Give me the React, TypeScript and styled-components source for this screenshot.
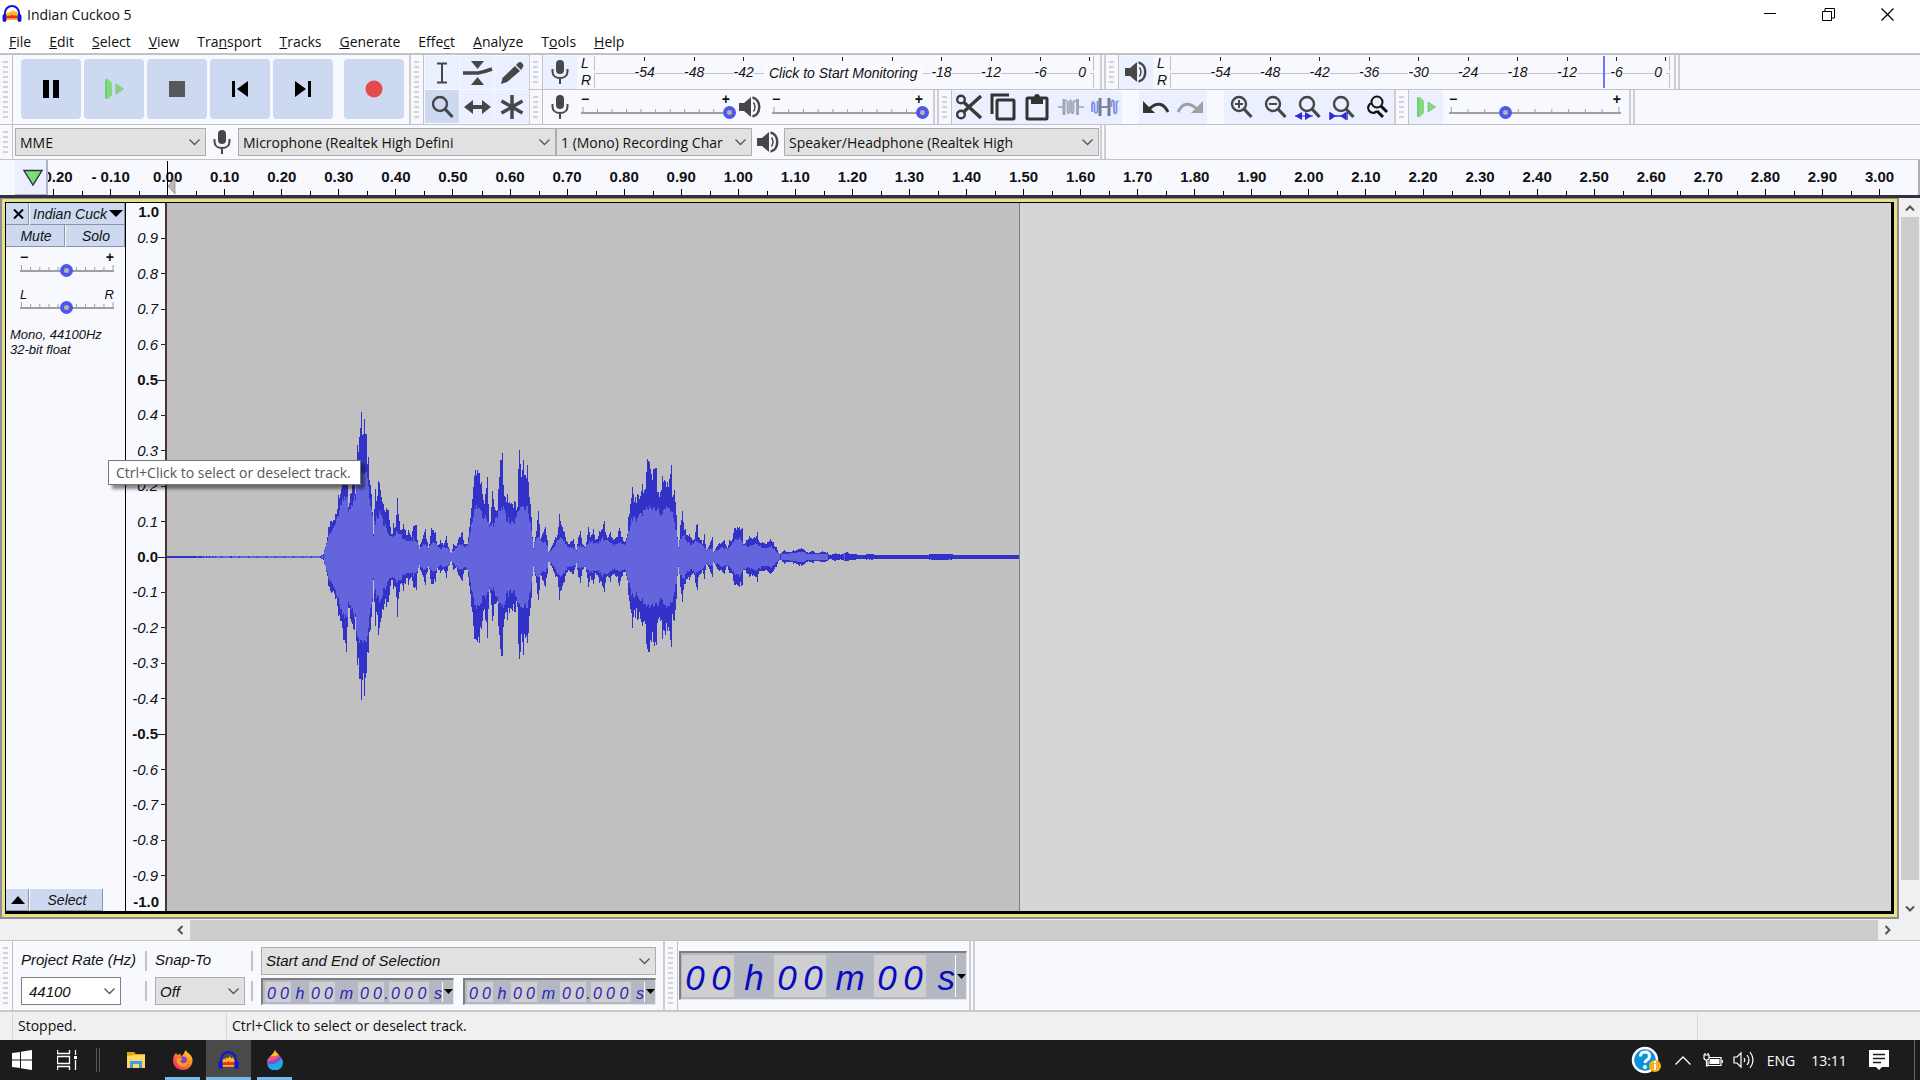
import React from "react";
import styled, { createGlobalStyle, css } from "styled-components";

const ui = `"Open Sans", "Noto Sans", sans-serif`;
const arial = `"Liberation Sans", Arial, sans-serif`;
const c = {
  panel: "#f8f9ff",
  line: "#c2c2c6",
  face: "#eaf0ff",
  blue: "#cdd9f1",
  ink: "#474747",
  grey: "#e1e1e1",
};

const GlobalStyle = createGlobalStyle`
  * { box-sizing: border-box; }
  body { margin: 0; background: #fff; font-family: ${ui}; font-size: 14px; color: #111; overflow: hidden; }
  button { border: 0; padding: 0; margin: 0; background: none; color: inherit; font: inherit; }
  svg { display: block; flex: none; }
`;

const Window = styled.div`
  display: flex;
  flex-direction: column;
  height: 100vh;
`;

/* ---------- title and menu ---------- */
const TitleBar = styled.header`
  display: flex;
  align-items: center;
  height: 28px;
  padding: 0 3px 0 2px;
  gap: 5px;
`;
const Title = styled.h1`
  margin: 0;
  flex: 1;
  font-size: 14px;
  font-weight: 400;
`;
const WindowButtons = styled.div`
  display: flex;
`;
const WindowButton = styled.button`
  display: grid;
  place-items: center;
  width: 59px;
  height: 28px;
`;
const MenuBar = styled.nav`
  display: flex;
  height: 27px;
  border-bottom: 2px solid ${c.line};
`;
const MenuItem = styled.button`
  padding: 0 9px;
  height: 26px;
`;

/* ---------- toolbars ---------- */
const Dock = styled.div`
  display: flex;
  background: ${c.panel};
`;
const DockRows = styled.div`
  flex: 1;
  min-width: 0;
`;
const DockRow = styled.div`
  display: flex;
  align-items: stretch;
  height: 35px;
  background: ${c.panel};
  border-bottom: 1px solid ${c.line};
`;
const Toolbar = styled.div<{ $w?: number; $tall?: boolean }>`
  display: flex;
  flex: none;
  align-items: center;
  width: ${(p) => (p.$w ? `${p.$w}px` : "auto")};
  border-right: 2px solid #cfcfd3;
  ${(p) => p.$tall && css`height: 70px; border-bottom: 1px solid ${c.line};`}
`;
const Grip = styled.div`
  align-self: stretch;
  flex: none;
  width: 13px;
  border-right: 1px solid ${c.line};
  padding: 6px 4px 5px 3px;
  &::before {
    content: "";
    display: block;
    height: 100%;
    background: repeating-linear-gradient(#d3d3d7 0 2px, transparent 2px 5px);
  }
`;
const Closer = styled.div`
  align-self: stretch;
  width: 4px;
  border-right: 2px solid #cfcfd3;
`;
const TransportGroup = styled.div`
  display: flex;
  align-self: flex-start;
  gap: 3px;
  padding: 4px 0 0 8px;
`;
const TransportButton = styled.button<{ $apart?: boolean }>`
  display: grid;
  place-items: center;
  width: 60px;
  height: 60px;
  border-radius: 4px;
  background: ${c.blue};
  margin-left: ${(p) => (p.$apart ? "8px" : "0")};
`;
const ToolGrid = styled.div`
  display: grid;
  grid-template-columns: repeat(3, 34px);
  gap: 1px;
  padding-left: 1px;
`;
const ToolButton = styled.button<{ $on?: boolean; $apart?: boolean }>`
  display: grid;
  place-items: center;
  flex: none;
  width: 34px;
  height: 33px;
  margin-left: ${(p) => (p.$apart ? "17px" : "0")};
  background: ${(p) => (p.$on ? c.blue : c.face)};
  border: solid ${(p) => (p.$on ? "#8f9cb8 #fff #fff #8f9cb8" : "#fff #adb4c6 #adb4c6 #fff")};
  border-width: ${(p) => (p.$on ? "2px 1px 1px 2px" : "1px 2px 2px 1px")};
`;
const IconBox = styled.span<{ $w: number }>`
  display: grid;
  place-items: center;
  flex: none;
  width: ${(p) => p.$w}px;
`;

/* ---------- meters ---------- */
const Channels = styled.div`
  display: flex;
  flex-direction: column;
  width: 17px;
  padding-left: 4px;
  font: italic 14px/17px ${arial};
`;
const MeterBox = styled.button<{ $w: number }>`
  display: grid;
  width: ${(p) => p.$w}px;
  height: 34px;
  text-align: left;
  background:
    linear-gradient(${c.line}, ${c.line}) left 1px/1px 15px no-repeat,
    linear-gradient(${c.line}, ${c.line}) left 19px/1px 14px no-repeat,
    linear-gradient(${c.line}, ${c.line}) right 1px/1px 15px no-repeat,
    linear-gradient(${c.line}, ${c.line}) right 19px/1px 14px no-repeat,
    linear-gradient(${c.line}, ${c.line}) 0 18px/100% 1px no-repeat;
  > * { grid-area: 1 / 1; }
`;
const MeterScale = styled.span`
  display: flex;
  padding: 0 4px 0 26px;
`;
const MeterMark = styled.span<{ $last?: boolean }>`
  flex: ${(p) => (p.$last ? 1 : 2)} 0 0;
  min-width: 0;
  height: 33px;
  padding-top: 9px;
  text-align: ${(p) => (p.$last ? "right" : "center")};
  font: italic 14px/17px ${arial};
  background: linear-gradient(#222, #222) ${(p) => (p.$last ? "right" : "center")} 2px/1px 4px no-repeat;
  > span { background: ${c.panel}; }
`;
const MeterHint = styled.span`
  align-self: center;
  justify-self: start;
  margin: 2px 0 0 170px;
  padding: 0 5px;
  background: #fbfbff;
  font: italic 14px/18px ${arial};
`;
const PeakLine = styled.span`
  width: 2px;
  height: 32px;
  margin: 1px 0 0 433px;
  background: #7373f7;
`;

/* ---------- sliders ---------- */
const SliderBox = styled.label<{ $w: number; $left: number; $right: number }>`
  display: block;
  flex: none;
  width: ${(p) => p.$w}px;
  margin: 0 ${(p) => p.$right}px 0 ${(p) => p.$left}px;
`;
const SliderEnds = styled.span`
  display: flex;
  justify-content: space-between;
  font: 14px/11px ${arial};
  > i { font-size: 13px; }
`;
const SliderStack = styled.span`
  display: grid;
  height: 15px;
  > * { grid-area: 1 / 1; }
`;
const Range = styled.input`
  appearance: none;
  height: 15px;
  width: calc(100% + 12px);
  margin: 0 -6px;
  background: none;
  &::-webkit-slider-thumb {
    appearance: none;
    width: 13px;
    height: 13px;
    border-radius: 50%;
    border: 4px solid #4d57ee;
    background: #b9b3a8;
  }
`;
function Slider(p: { label: string; w: number; left?: number; right?: number; value: number; ends?: [string, string] }) {
  const [a, b] = p.ends ?? ["−", "+"];
  return (
    <SliderBox $w={p.w} $left={p.left ?? 0} $right={p.right ?? 0}>
      <SliderEnds>
        {p.ends ? <><i>{a}</i><i>{b}</i></> : <><b>{a}</b><b>{b}</b></>}
      </SliderEnds>
      <SliderStack>
        <svg width="100%" height="15">
          <rect x="0" y="7" width="100%" height="2" fill="#a0a0a0" />
          {Array.from({ length: 11 }, (_, i) => (
            <rect key={i} x={`${1 + i * 9.75}%`} y={i % 10 ? 4 : 2} width="1" height={i % 10 ? 3 : 5} fill="#a0a0a0" />
          ))}
        </svg>
        <Range type="range" min={0} max={100} defaultValue={p.value} aria-label={p.label} />
      </SliderStack>
    </SliderBox>
  );
}

/* ---------- drop-downs ---------- */
const PickBox = styled.span<{ $w: number; $white?: boolean; $italic?: boolean }>`
  display: grid;
  align-items: center;
  flex: none;
  width: ${(p) => p.$w}px;
  height: 28px;
  border: 1px solid ${(p) => (p.$white ? "#7f7f7f" : "#adadad")};
  background: ${(p) => (p.$white ? "#fff" : c.grey)};
  > * { grid-area: 1 / 1; }
  > svg { justify-self: end; margin-right: 4px; pointer-events: none; }
  > select, > input {
    appearance: none;
    width: 100%;
    min-width: 0;
    height: 26px;
    padding: 0 20px 0 ${(p) => (p.$white ? 7 : 4)}px;
    border: 0;
    border-radius: 0;
    outline: 0;
    background: none;
    color: #111;
    font: ${(p) => (p.$italic ? `italic 15px ${arial}` : `14px ${ui}`)};
  }
`;
const Chevron = () => (
  <svg width="13" height="8" viewBox="0 0 13 8"><path d="M1.5 1.5l5 5 5-5" fill="none" stroke="#555" strokeWidth="1.3" /></svg>
);
function Pick(p: { w: number; label: string; value: string; italic?: boolean }) {
  return (
    <PickBox $w={p.w} $italic={p.italic}>
      <select aria-label={p.label} defaultValue={p.value}><option>{p.value}</option></select>
      <Chevron />
    </PickBox>
  );
}

/* ---------- time ruler ---------- */
const TimeRuler = styled.div`
  display: flex;
  position: relative;
  height: 35px;
  background: ${c.panel};
  padding-left: 15px;
`;
const PinButton = styled.button`
  display: grid;
  place-items: center;
  flex: none;
  width: 33px;
  padding-left: 4px;
  background: ${c.face};
  border-right: 2px solid #adb4c6;
  border-bottom: 1px solid #adb4c6;
`;
const TimeScale = styled.div`
  flex: 1;
  min-width: 0;
  overflow: hidden;
  border-right: 2px solid #b0b0b4;
`;
const TimeMarks = styled.div`
  display: flex;
  height: 35px;
  margin: 0 10px 0 -23px;
`;
const TimeMark = styled.span`
  flex: 1 0 0;
  min-width: 0;
  padding-top: 8px;
  text-align: center;
  white-space: nowrap;
  font: bold 15px/18px ${arial};
  background:
    linear-gradient(#000, #000) center bottom/1px 6px no-repeat,
    linear-gradient(#000, #000) left bottom/1px 4px no-repeat;
`;
const PlayHead = styled.svg`
  position: absolute;
  left: 166px;
  top: 1px;
`;

/* ---------- track area ---------- */
const TrackArea = styled.main`
  flex: 1;
  min-height: 0;
  display: flex;
  border-top: 3px solid #32323e;
  background: #f0f0f0;
`;
const Frame = styled.div`
  flex: 1;
  min-width: 0;
  display: flex;
  border: solid #8c8ca2;
  border-width: 1px 2px 2px 2px;
  margin: 0 1px 1px 0;
`;
const Highlight = styled.div`
  flex: 1;
  min-width: 0;
  display: flex;
  border: 3px solid #e6e380;
`;
const Track = styled.section`
  flex: 1;
  min-width: 0;
  display: flex;
  border: solid #000;
  border-width: 1px 3px 3px 1px;
`;
const ControlPanel = styled.div`
  display: flex;
  flex-direction: column;
  flex: none;
  width: 120px;
  border-right: 1px solid #000;
  background: ${c.panel};
  font: italic 14px/16px ${arial};
`;
const PanelRow = styled.div`
  display: flex;
  flex: none;
  height: 22px;
  gap: 1px;
`;
const PanelButton = styled.button<{ $w?: number }>`
  display: flex;
  align-items: center;
  justify-content: center;
  gap: 2px;
  flex: ${(p) => (p.$w ? "none" : "1")};
  width: ${(p) => (p.$w ? `${p.$w}px` : "auto")};
  padding-left: 2px;
  background: ${c.blue};
  border: solid #8f949f;
  border-width: 0 1px 1px 0;
`;
const PanelSliders = styled.div`
  display: flex;
  flex-direction: column;
  gap: 11px;
  padding: 5px 0 0 14px;
`;
const TrackInfo = styled.p`
  flex: 1;
  margin: 0;
  padding: 12px 0 0 4px;
  font-size: 13px;
  line-height: 15px;
`;
const LevelRuler = styled.div`
  display: flex;
  flex-direction: column;
  flex: none;
  width: 41px;
  border-right: 2px solid #4a3434;
  background: ${c.panel};
`;
const LevelMark = styled.span<{ $half?: boolean; $bold?: boolean }>`
  flex: ${(p) => (p.$half ? 1 : 2)} 0 0;
  min-height: 0;
  display: flex;
  align-items: center;
  justify-content: flex-end;
  padding-right: ${(p) => (p.$half ? 6 : 7)}px;
  font: ${(p) => (p.$bold ? "bold" : "italic")} 15px/16px ${arial};
  background: ${(p) => (p.$half ? "none" : `linear-gradient(#222, #222) right center/${p.$bold ? 7 : 4}px 1px no-repeat`)};
`;
const Canvas = styled.div`
  flex: 1;
  min-width: 0;
  background: #d6d6d6;
`;
const Clip = styled.div`
  width: 49.5%;
  height: 100%;
  border-right: 1px solid #808080;
  background: #c0c0c0;
`;

/* ---------- scroll bars ---------- */
const VScroll = styled.div`
  display: flex;
  flex-direction: column;
  align-items: center;
  flex: none;
  width: 20px;
  padding: 1px 1px 2px;
`;
const HScroll = styled.div`
  display: flex;
  align-items: center;
  flex: none;
  height: 20px;
  padding: 0 22px 0 170px;
  background: #f0f0f0;
`;
const ScrollArrow = styled.button`
  display: grid;
  place-items: center;
  flex: none;
  width: 20px;
  height: 18px;
`;
const Thumb = styled.div`
  flex: 1;
  align-self: stretch;
  background: #cdcdcd;
`;
const ThumbGap = styled.div`
  height: 20px;
`;

/* ---------- selection bar ---------- */
const SelectionDock = styled.footer`
  display: flex;
  flex: none;
  height: 72px;
  border-top: 1px solid ${c.line};
  border-bottom: 2px solid #c8c8cc;
  background: ${c.panel};
`;
const Field = styled.div<{ $w: number }>`
  display: flex;
  flex-direction: column;
  flex: none;
  gap: 3px;
  width: ${(p) => p.$w}px;
  font: italic 15px/28px ${arial};
  > label { height: 28px; white-space: nowrap; }
`;
const Divider = styled.div`
  width: 2px;
  height: 50px;
  margin-right: 8px;
  background: linear-gradient(${c.line} 0 20px, transparent 20px 30px, ${c.line} 30px);
`;
const TimeRow = styled.div`
  display: flex;
  gap: 9px;
`;
const TimeBox = styled.div<{ $big?: boolean }>`
  display: flex;
  flex: none;
  padding: 2px 0 2px ${(p) => (p.$big ? 1 : 2)}px;
  height: ${(p) => (p.$big ? 49 : 27)}px;
  border: solid #7e7e82;
  border-width: 2px 1px 1px 2px;
  border-right-color: #e4e4e4;
  border-bottom-color: #e4e4e4;
  background: #b3b8c2;
  color: ${(p) => (p.$big ? "#0a0abf" : "#2c22bd")};
  font: italic ${(p) => (p.$big ? "35px/45px" : "16px/23px")} ${arial};
`;
const Digits = styled.span`
  display: flex;
  background: #cfcfcf;
`;
const Cell = styled.span<{ $w: number; $end?: boolean }>`
  width: ${(p) => p.$w}px;
  text-align: ${(p) => (p.$end ? "right" : "center")};
`;
const TimeMenu = styled.button`
  display: grid;
  place-items: center;
  width: 11px;
  border-left: 1px solid #fff;
`;

const StatusBar = styled.div`
  display: flex;
  flex: none;
  height: 28px;
  padding: 1px 0 1px 12px;
  background: #f0f0f0;
`;
const StatusCell = styled.span<{ $w?: number }>`
  flex: ${(p) => (p.$w ? "none" : "1")};
  width: ${(p) => (p.$w ? `${p.$w}px` : "auto")};
  padding-left: 5px;
  border-left: 1px solid #d7d7d7;
  line-height: 26px;
`;

/* ---------- task bar ---------- */
const TaskBar = styled.div`
  display: flex;
  align-items: stretch;
  flex: none;
  height: 40px;
  background: #1c1c1c;
  color: #fff;
`;
const TaskButton = styled.button<{ $w: number; $running?: boolean; $active?: boolean }>`
  display: grid;
  place-items: center;
  width: ${(p) => p.$w}px;
  background: ${(p) => (p.$active ? "#4a4a4a" : "none")};
  box-shadow: ${(p) => (p.$running ? "inset 0 -3px #76b9ed" : "none")};
`;
const TaskGap = styled.span<{ $w?: number }>`
  flex: ${(p) => (p.$w ? "none" : "1")};
  width: ${(p) => p.$w ?? 0}px;
`;
const Clock = styled.button<{ $w: number }>`
  width: ${(p) => p.$w}px;
  font-size: 14px;
  text-align: center;
`;
const ShowDesktop = styled.button`
  width: 6px;
  border-left: 1px solid #666;
`;
const Tooltip = styled.div`
  position: absolute;
  left: 108px;
  top: 460px;
  padding: 0 9px 0 7px;
  border: 1px solid #767676;
  background: #fff;
  color: #575757;
  line-height: 23px;
  white-space: nowrap;
  box-shadow: 4px 4px 3px rgba(0, 0, 0, 0.45);
`;

/* ---------- icons ---------- */
const Headphones = ({ size = 20 }: { size?: number }) => (
  <svg width={size} height={size} viewBox="0 0 20 20">
    <path d="M4 16V10L6 8l1 1 1-2 1.5 1L11 6l2 2 1-1 2 3v6z" fill="#fdb827" />
    <path d="M4.5 12.2l2-.8 1.5.4 2-1 2 1 2-.6 1.5 1v2H4.5z" fill="#f22d12" />
    <path d="M3 12V9a7 7 0 0 1 14 0v3" fill="none" stroke="#1414dc" strokeWidth="2" />
    <rect x="0.5" y="10" width="4" height="8" rx="2" fill="#1414dc" />
    <rect x="15.5" y="10" width="4" height="8" rx="2" fill="#1414dc" />
  </svg>
);
const Mic = () => (
  <svg width="18" height="26" viewBox="0 0 18 26">
    <rect x="5" y="1" width="8" height="14" rx="4" fill={c.ink} />
    <path d="M1.5 10v2.500c0 4 3.200 6.500 7.500 6.500s7.500-2.500 7.500-6.500V10M9 19v6" fill="none" stroke={c.ink} strokeWidth="2" />
  </svg>
);
const Speaker = () => (
  <svg width="24" height="24" viewBox="0 0 24 24">
    <path d="M1 8h5l7-6v20l-7-6H1z" fill={c.ink} />
    <path d="M15.500 7.500q3 4.500 0 9" fill="none" stroke={c.ink} strokeWidth="1.500" />
    <path d="M14.500 2.500c9 2 9 17 0 19" fill="none" stroke={c.ink} strokeWidth="2.500" />
  </svg>
);
const PlaySpeed = () => (
  <svg width="22" height="22" viewBox="0 0 22 22">
    <path d="M2 1h3l4 4v12l-4 4H2z" fill="#84d97c" /><path d="M3 2v18" stroke="#66bd62" />
    <path d="M13 6l7.500 5-7.500 5z" fill="#84d97c" stroke="#79bd7a" strokeWidth="0.800" />
  </svg>
);
const Lens = ({ children }: { children?: React.ReactNode }) => (
  <svg width="28" height="28" viewBox="0 0 28 28" fill="none" stroke={c.ink}>
    <circle cx="12" cy="11" r="7" strokeWidth="2.400" /><path d="M17 16l7.500 8" strokeWidth="3.200" />{children}
  </svg>
);
const stroke = (w: number, color = c.ink) => ({ fill: "none", stroke: color, strokeWidth: w });
const Tri = ({ d, w = 12, h = 7 }: { d: string; w?: number; h?: number }) => (
  <svg width={w} height={h}><path d={d} fill="#000" /></svg>
);

/* ---------- waveform ---------- */
// Peak envelope: pairs of sample position and level, in thirds of a pixel from t = 0.23 s.
const env = [
  -399,2,40,3,60,3,68,8,75,30,80,60,85,90,90,108,100,110,107,130,115,185,125,215,130,250,137,292,140,220,145,150,150,190,155,215,162,220,165,190,170,335,174,315,178,360,183,436,188,370,193,414,197,368,201,280,205,300,209,215,214,190,219,70,224,205,230,183,235,228,240,200,245,165,250,160,257,148,263,140,270,90,275,68,280,102,285,90,290,178,295,130,300,80,308,100,314,80,320,65,325,82,333,60,338,92,347,97,352,50,356,25,362,45,368,65,375,85,380,45,385,28,393,86,400,80,405,75,410,35,420,50,430,35,438,62,445,30,452,12,460,40,467,32,475,55,485,74,492,40,502,38,506,90,512,148,518,210,525,262,532,260,538,252,543,225,549,170,555,190,560,240,564,160,568,100,573,150,577,197,583,150,590,140,595,205,600,290,605,313,609,215,615,180,622,190,628,165,635,160,641,168,650,150,655,265,658,322,663,240,669,290,674,245,681,275,686,180,691,160,696,60,699,28,705,60,714,138,720,55,728,75,735,90,740,50,745,15,755,35,765,60,770,65,778,130,785,90,793,75,800,45,810,45,820,55,827,20,835,60,840,78,846,40,855,30,864,90,870,60,878,84,885,50,890,55,897,78,905,85,911,108,918,65,925,60,930,75,940,50,950,60,957,87,965,60,973,45,980,70,985,120,990,160,995,210,1002,165,1010,190,1018,175,1026,218,1035,205,1040,293,1047,285,1053,250,1060,265,1067,268,1072,195,1078,180,1085,243,1092,230,1100,225,1107,235,1112,275,1117,180,1123,200,1128,125,1132,60,1135,30,1140,95,1145,137,1152,80,1156,85,1160,65,1168,70,1175,50,1182,55,1187,95,1190,100,1194,60,1202,50,1207,40,1212,68,1218,20,1225,30,1235,60,1240,15,1248,30,1255,40,1265,45,1272,52,1280,28,1288,50,1295,55,1303,87,1315,87,1325,86,1330,40,1340,50,1348,62,1355,55,1362,60,1371,76,1376,45,1385,45,1395,40,1405,45,1410,54,1418,45,1427,30,1435,12,1440,8,1452,22,1460,14,1480,20,1490,22,1502,27,1510,25,1520,14,1538,18,1545,12,1565,17,1580,14,1588,6,1605,11,1620,7,1640,14,1655,9,1680,7,1720,8,1740,5,1840,7,1860,6,1900,8,1946,8,2040,5,2163,5,
];
function buildWave() {
  const n = 853;
  const noise = (i: number) => Math.abs((Math.sin(i * 12.9898) * 437.58) % 1);
  const peak: number[] = [];
  let k = 0;
  for (let i = 0; i < n; i++) {
    const x = i * 3 - 399;
    while (k + 2 < env.length - 2 && env[k + 2] < x) k += 2;
    const a = { x: env[k], v: env[k + 1] };
    const b = { x: env[k + 2], v: env[k + 3] };
    const near = b.x - x <= 1 ? b.v : x - a.x <= 1 ? a.v : -1;
    if (near >= 0) {
      peak.push(near / 3);
      continue;
    }
    const t = Math.min(1, Math.max(0, (x - a.x) / (b.x - a.x)));
    const v = (a.v + (b.v - a.v) * t) / 3;
    peak.push(v < 3 ? v : v * (0.88 + 0.16 * noise(i)));
  }
  let outer = "", inner = "";
  peak.forEach((v, i) => {
    const a = Math.max(1, Math.round(v));
    const low = Math.max(1, Math.round(v * (0.98 + 0.04 * Math.sin(i * 2.3))));
    outer += `M${i} ${354 - a}h1V${355 + low}h-1z`;
    let sum = 0, m = 0;
    for (let j = Math.max(0, i - 3); j <= Math.min(n - 1, i + 3); j++) { sum += peak[j]; m++; }
    const ratio = (i > 156 && i < 206 ? 0.7 : 0.58) + 0.14 * noise(i + 7);
    const cap = i > 300 ? 52 : 88;
    const r = Math.round(Math.min(v * 0.9, (sum / m) * ratio, cap - 6 * noise(i + 3)));
    if (r > 2 || (i < 156 && i % 9)) inner += `M${i} ${354 - r}h1V${355 + r}h-1z`;
  });
  return { outer, inner };
}
const wave = buildWave();

const menus: [string, string, string][] = [
  ["", "F", "ile"], ["", "E", "dit"], ["", "S", "elect"], ["", "V", "iew"], ["Tra", "n", "sport"], ["", "T", "racks"],
  ["", "G", "enerate"], ["Effe", "c", "t"], ["", "A", "nalyze"], ["T", "o", "ols"], ["", "H", "elp"],
];
const db = ["-54", "-48", "-42", "-36", "-30", "-24", "-18", "-12", "-6"];
const times = Array.from({ length: 33 }, (_, i) => (i < 2 ? `- 0.${2 - i}0` : ((i - 2) / 10).toFixed(2)));
const levels = Array.from({ length: 21 }, (_, i) => ((10 - i) / 10).toFixed(1));

function Meter({ recording }: { recording?: boolean }) {
  return (
    <>
      <Channels><span>L</span><span>R</span></Channels>
      <MeterBox $w={500} aria-label={recording ? "Recording level" : "Playback level"}>
        <MeterScale>
          {db.map((d, i) => <MeterMark key={d}>{recording && i > 2 && i < 6 ? null : <span>{d}</span>}</MeterMark>)}
          <MeterMark $last><span>0&nbsp;</span></MeterMark>
        </MeterScale>
        {recording ? <MeterHint>Click to Start Monitoring</MeterHint> : <PeakLine />}
      </MeterBox>
    </>
  );
}

function TimeDisplay({ big }: { big?: boolean }) {
  const d = big ? 26 : 13;
  const two = <Digits><Cell $w={d}>0</Cell><Cell $w={d}>0</Cell></Digits>;
  return (
    <TimeBox $big={big}>
      {two}<Cell $w={big ? 40 : 18}>h</Cell>
      {two}<Cell $w={big ? 48 : 23}>m</Cell>
      {two}
      {!big && <><Cell $w={5}>.</Cell><Digits><Cell $w={13}>0</Cell><Cell $w={13}>0</Cell><Cell $w={14}>0</Cell></Digits></>}
      <Cell $w={big ? 29 : 13} $end>s</Cell>
      <TimeMenu aria-label="Time format"><Tri d="M0 0h9L4.500 5z" w={9} h={5} /></TimeMenu>
    </TimeBox>
  );
}

export default function App() {
  return (
    <Window>
      <GlobalStyle />
      <TitleBar>
        <Headphones />
        <Title>Indian Cuckoo 5</Title>
        <WindowButtons>
          <WindowButton aria-label="Minimize"><svg width="12" height="12"><path d="M0 5.500h12" stroke="#000" /></svg></WindowButton>
          <WindowButton aria-label="Restore"><svg width="13" height="13"><path d="M.5 3.500h9v9h-9zM3 3V.5h9.500V10H10" {...stroke(1, "#000")} /></svg></WindowButton>
          <WindowButton aria-label="Close"><svg width="13" height="13"><path d="M.5.5l12 12M12.500.5l-12 12" {...stroke(1.2, "#000")} /></svg></WindowButton>
        </WindowButtons>
      </TitleBar>
      <MenuBar>
        {menus.map(([a, b, d]) => <MenuItem key={a + b + d}>{a}<u>{b}</u>{d}</MenuItem>)}
      </MenuBar>

      <Dock>
        <Toolbar $tall $w={411}>
          <Grip />
          <TransportGroup>
            <TransportButton aria-label="Pause"><svg width="16" height="18"><path d="M0 0h6v18H0zM10 0h6v18h-6z" /></svg></TransportButton>
            <TransportButton aria-label="Play"><PlaySpeed /></TransportButton>
            <TransportButton aria-label="Stop"><svg width="16" height="16"><rect width="16" height="16" fill="#585858" /></svg></TransportButton>
            <TransportButton aria-label="Skip to start"><svg width="16" height="16"><path d="M0 0h3v16H0zM16 0v16L5 8z" /></svg></TransportButton>
            <TransportButton aria-label="Skip to end"><svg width="16" height="16"><path d="M13 0h3v16h-3zM0 0v16l11-8z" /></svg></TransportButton>
            <TransportButton $apart aria-label="Record"><svg width="18" height="18"><circle cx="9" cy="9" r="8.500" fill="#e34b4b" /></svg></TransportButton>
          </TransportGroup>
        </Toolbar>
        <Toolbar $tall $w={119}>
          <Grip />
          <ToolGrid>
            <ToolButton aria-label="Selection tool"><svg width="12" height="22"><path d="M1 1.500h10M1 20.500h10M6 1v20" {...stroke(2)} /></svg></ToolButton>
            <ToolButton aria-label="Envelope tool"><svg width="31" height="26"><path d="M9 1h13l-6.500 8zM9 25h13l-6.500-8z" fill={c.ink} /><path d="M1 13h15q6-1 14-4" {...stroke(3.5)} /></svg></ToolButton>
            <ToolButton aria-label="Draw tool"><svg width="26" height="26"><path d="M2 24l1.500-6L16 6l5 5L8 22zM17 5l2-2q2-2 4 0t1 4l-2 3z" fill={c.ink} /></svg></ToolButton>
            <ToolButton $on aria-label="Zoom tool"><Lens /></ToolButton>
            <ToolButton aria-label="Time shift tool"><svg width="27" height="16"><path d="M0 8l9-7v5h9V1l9 7-9 7v-5H9v5z" fill={c.ink} /></svg></ToolButton>
            <ToolButton aria-label="Multi-tool"><svg width="24" height="26"><path d="M12 1v24M1.500 7l21 12M22.500 7l-21 12" {...stroke(3.5)} /></svg></ToolButton>
          </ToolGrid>
        </Toolbar>
        <DockRows>
          <DockRow>
            <Toolbar $w={572}>
              <Grip />
              <ToolButton aria-label="Recording meter"><Mic /></ToolButton>
              <Meter recording />
            </Toolbar>
            <Closer />
            <Toolbar $w={570}>
              <Grip />
              <ToolButton aria-label="Playback meter"><Speaker /></ToolButton>
              <Meter />
            </Toolbar>
            <Closer />
          </DockRow>
          <DockRow>
            <Toolbar $w={405}>
              <Grip />
              <IconBox $w={34}><Mic /></IconBox>
              <Slider label="Recording volume" w={149} left={4} right={8} value={100} />
              <IconBox $w={24}><Speaker /></IconBox>
              <Slider label="Playback volume" w={151} left={10} value={100} />
            </Toolbar>
            <Closer />
            <Toolbar>
              <Grip />
              <ToolButton aria-label="Cut"><svg width="28" height="28"><circle cx="6" cy="6.500" r="3.800" {...stroke(2.4, "#3a3a3a")} /><circle cx="6" cy="21.500" r="3.800" {...stroke(2.4, "#3a3a3a")} /><path d="M9 18.500L26 3M9 9.500L26 25" {...stroke(3.5, "#3a3a3a")} /></svg></ToolButton>
              <ToolButton aria-label="Copy"><svg width="26" height="28"><path d="M2 21V2h17" {...stroke(3, "#333")} /><rect x="7" y="7" width="17" height="19" rx="1" {...stroke(3, "#333")} /></svg></ToolButton>
              <ToolButton aria-label="Paste"><svg width="24" height="28"><rect x="2" y="5" width="20" height="21" rx="1" {...stroke(3, "#333")} /><path d="M6 5h3q0-4 3-4t3 4h3v6H6z" fill="#333" /></svg></ToolButton>
              <ToolButton aria-label="Trim"><svg width="28" height="20"><path d="M1 10h5M22 10h5" {...stroke(2, "#a9b6e4")} /><path d="M7 2v16M20.500 2v16" {...stroke(3, "#a3a5b0")} /><path d="M9 4q1-1 1.500 2v9q1 3 2 0V5q1-3 2 0v10q1 3 2 0V5q1-2 2 0" {...stroke(1.8, "#a6a9b8")} /></svg></ToolButton>
              <ToolButton aria-label="Silence"><svg width="28" height="22"><path d="M1 16V8q1-4 2.500 0v7q1.500 4 3 0V5M20.500 11V6q1.500-3 2.500 0v10q1.500 3 2.500 0V6l2-1" {...stroke(1.8, "#7f8df2")} /><path d="M9 2v18M18 2v18" {...stroke(3, "#777b88")} /><path d="M9 11h9" {...stroke(2, "#7c85b5")} /></svg></ToolButton>
              <ToolButton $apart aria-label="Undo"><svg width="28" height="20"><path d="M1 4v12h12z" fill="#333" /><path d="M7 12Q19 1 26 15" {...stroke(3, "#333")} /></svg></ToolButton>
              <ToolButton aria-label="Redo"><svg width="28" height="20"><path d="M27 4v12H15z" fill="#a0a0a0" /><path d="M21 12Q9 1 2 15" {...stroke(3, "#a0a0a0")} /></svg></ToolButton>
              <ToolButton $apart aria-label="Zoom in"><Lens><path d="M8 11h8M12 7v8" strokeWidth="2" /></Lens></ToolButton>
              <ToolButton aria-label="Zoom out"><Lens><path d="M8 11h8" strokeWidth="2" /></Lens></ToolButton>
              <ToolButton aria-label="Fit selection"><Lens><path d="M0 23l7-4v8zM17 23l-7-4v8z" fill="#2b2bd0" stroke="none" /><path d="M0 23h18" stroke="#2b2bd0" /></Lens></ToolButton>
              <ToolButton aria-label="Fit project"><Lens><path d="M0 19v8M18 19v8M2 23h14" stroke="#2b2bd0" strokeWidth="1.500" /><path d="M7 23l-6-4v8zM11 23l6-4v8z" fill="#2b2bd0" stroke="none" /></Lens></ToolButton>
              <ToolButton aria-label="Zoom toggle"><svg width="26" height="26"><circle cx="13" cy="8" r="5.500" {...stroke(2, "#111")} /><path d="M8 9a5 5 0 1 0 5 8" {...stroke(2.2, "#111")} /><path d="M17 12l6 6M13 17l6 6" {...stroke(3, "#111")} /></svg></ToolButton>
            </Toolbar>
            <Toolbar $w={235}>
              <Grip />
              <ToolButton aria-label="Play at speed"><PlaySpeed /></ToolButton>
              <Slider label="Playback speed" w={172} left={6} value={33} />
            </Toolbar>
            <Closer />
          </DockRow>
        </DockRows>
      </Dock>

      <DockRow>
        <Toolbar $w={1102}>
          <Grip />
          <IconBox $w={2} />
          <Pick w={191} label="Audio host" value="MME" />
          <IconBox $w={32}><Mic /></IconBox>
          <Pick w={318} label="Recording device" value="Microphone (Realtek High Defini" />
          <Pick w={196} label="Recording channels" value="1 (Mono) Recording Char" />
          <IconBox $w={32}><Speaker /></IconBox>
          <Pick w={315} label="Playback device" value="Speaker/Headphone (Realtek High" />
        </Toolbar>
        <Closer />
      </DockRow>

      <TimeRuler>
        <PinButton aria-label="Pinned play head"><svg width="20" height="17"><path d="M1 1.500h18L10 16z" fill="#7fdc78" stroke="#333" strokeWidth="1.400" /></svg></PinButton>
        <TimeScale><TimeMarks>{times.map((t) => <TimeMark key={t}>{t}</TimeMark>)}</TimeMarks></TimeScale>
        <PlayHead width="10" height="34"><path d="M9 17v16L2 25z" fill="#b9b9b9" stroke="#888" strokeWidth="0.700" /><path d="M1.500 0v34" stroke="#000" /></PlayHead>
      </TimeRuler>

      <TrackArea>
        <Frame>
          <Highlight>
            <Track>
              <ControlPanel>
                <PanelRow>
                  <PanelButton $w={23} aria-label="Close track"><svg width="11" height="10"><path d="M1 .5l9 9M10 .5l-9 9" {...stroke(2, "#000")} /></svg></PanelButton>
                  <PanelButton>Indian Cuck<Tri d="M0 0h14L7 7z" w={14} /></PanelButton>
                </PanelRow>
                <PanelRow><PanelButton>Mute</PanelButton><PanelButton>Solo</PanelButton></PanelRow>
                <PanelSliders>
                  <Slider label="Gain" w={94} value={49} />
                  <Slider label="Pan" w={94} value={49} ends={["L", "R"]} />
                </PanelSliders>
                <TrackInfo>Mono, 44100Hz<br />32-bit float</TrackInfo>
                <PanelRow>
                  <PanelButton $w={23} aria-label="Collapse"><Tri d="M0 8h14L7 0z" w={14} h={8} /></PanelButton>
                  <PanelButton $w={73}>Select</PanelButton>
                </PanelRow>
              </ControlPanel>
              <LevelRuler>
                {levels.map((l, i) => <LevelMark key={l + i} $half={i % 20 === 0} $bold={i % 5 === 0}>{l}</LevelMark>)}
              </LevelRuler>
              <Canvas>
                <Clip>
                  <svg width="100%" height="100%" viewBox="0 0 853 709" preserveAspectRatio="none" shapeRendering="crispEdges">
                    <path d={wave.outer} fill="#3232c8" />
                    <path d={wave.inner} fill="#6464dc" />
                  </svg>
                </Clip>
              </Canvas>
            </Track>
          </Highlight>
        </Frame>
        <VScroll>
          <ScrollArrow aria-label="Scroll up"><svg width="10" height="8"><path d="M1 6.500l4-4 4 4" {...stroke(2, "#555")} /></svg></ScrollArrow>
          <Thumb />
          <ThumbGap />
          <ScrollArrow aria-label="Scroll down"><svg width="10" height="8"><path d="M1 1.500l4 4 4-4" {...stroke(2, "#555")} /></svg></ScrollArrow>
        </VScroll>
      </TrackArea>
      <HScroll>
        <ScrollArrow aria-label="Scroll left"><svg width="8" height="10"><path d="M6.500 1l-4 4 4 4" {...stroke(2, "#555")} /></svg></ScrollArrow>
        <Thumb />
        <ScrollArrow aria-label="Scroll right"><svg width="8" height="10"><path d="M1.500 1l4 4-4 4" {...stroke(2, "#555")} /></svg></ScrollArrow>
      </HScroll>

      <SelectionDock>
        <Toolbar $w={665}>
          <Grip />
          <IconBox $w={8} />
          <Field $w={124}>
            <label htmlFor="rate">Project Rate (Hz)</label>
            <PickBox $w={100} $white $italic><input id="rate" defaultValue="44100" /><Chevron /></PickBox>
          </Field>
          <Divider />
          <Field $w={96}>
            <label htmlFor="snap">Snap-To</label>
            <PickBox $w={90} $italic><select id="snap"><option>Off</option></select><Chevron /></PickBox>
          </Field>
          <Divider />
          <Field $w={395}>
            <Pick w={395} italic label="Selection mode" value="Start and End of Selection" />
            <TimeRow><TimeDisplay /><TimeDisplay /></TimeRow>
          </Field>
        </Toolbar>
        <Toolbar $w={306}>
          <Grip />
          <IconBox $w={1} />
          <TimeDisplay big />
        </Toolbar>
        <Closer />
      </SelectionDock>
      <StatusBar>
        <StatusCell $w={214}>Stopped.</StatusCell>
        <StatusCell>Ctrl+Click to select or deselect track.</StatusCell>
        <StatusCell $w={223} />
      </StatusBar>

      <TaskBar>
        <TaskButton $w={44} aria-label="Start"><svg width="20" height="20"><path d="M0 3l8-1v7.500H0zM9 1.800L20 0v9.500H9zM0 10.500h8V18l-8-1zM9 10.500h11V20L9 18.200z" fill="#fff" /></svg></TaskButton>
        <TaskButton $w={46} aria-label="Task view"><svg width="20" height="20"><path d="M.5 0v3.500h12V0M.5 20v-3.500h12V20M.5 6.500h12v7H.5zM18.500 0v5M18.500 10v10" {...stroke(1.3, "#fff")} /><rect x="17" y="6" width="3" height="3" fill="#fff" /></svg></TaskButton>
        <TaskButton $w={17} aria-label="Toolbar handle"><svg width="5" height="24"><path d="M.5 0v24M3.500 0v24" stroke="#555" /></svg></TaskButton>
        <TaskGap $w={11} />
        <TaskButton $w={36} aria-label="File Explorer"><svg width="18" height="16"><path d="M0 0h7l2 2h9v14H0z" fill="#e5a50f" /><path d="M0 4l8-1h10v13H0z" fill="#ffd766" /><path d="M3 16V9h12v7h-3v-4H6v4z" fill="#3f9ee0" /></svg></TaskButton>
        <TaskGap $w={11} />
        <TaskButton $w={35} $running aria-label="Firefox"><svg width="20" height="20"><defs><linearGradient id="ff" x1="1" y1="0" x2="0.200" y2="1"><stop offset="0" stopColor="#fff04a" /><stop offset="0.450" stopColor="#ff8a1e" /><stop offset="1" stopColor="#f0256b" /></linearGradient></defs><path d="M13 0c0 3 6 4 6.500 9.500C20 15 16 20 10 20S0 16 0 10.500C0 7 1 5 3 3l1.500 2L7 3.500 8 6c3-1 3-4 5-6z" fill="url(#ff)" /><circle cx="10" cy="10.500" r="4" fill="#7a45d6" /><path d="M4 8c3-1 5 0 6 2-3-1-3 2-1 3 3 1 5-1 5-3 2 4-1 7-4 7-4 0-7-4-6-9z" fill="#ff9b22" /></svg></TaskButton>
        <TaskGap $w={6} />
        <TaskButton $w={45} $running $active aria-label="Audacity"><Headphones size={21} /></TaskButton>
        <TaskGap $w={6} />
        <TaskButton $w={35} $running aria-label="Paint"><svg width="16" height="20"><defs><clipPath id="drop"><path d="M8 0c1 4 8 7 8 12.500A8 8 0 0 1 0 12.500C0 7 7 5 8 0z" /></clipPath></defs><g clipPath="url(#drop)"><rect width="16" height="20" fill="#1fa9e6" /><path d="M0 14Q8 16 16 7V0H0z" fill="#8b49c9" /><path d="M0 11Q8 12 15 4V0H0z" fill="#f0557a" /><path d="M4 6Q9 7 13 4V0H4z" fill="#fbc21a" /></g></svg></TaskButton>
        <TaskGap />
        <TaskButton $w={36} aria-label="Help"><svg width="30" height="28"><circle cx="14" cy="14" r="12" fill="#0b93d8" stroke="#fff" strokeWidth="2.500" /><path d="M9.500 10.500q0-4.500 4.500-4.500t4.500 4q0 2.500-2.500 4-2 1-2 3" {...stroke(3, "#fff")} /><circle cx="14" cy="21" r="2" fill="#fff" /><circle cx="24" cy="20" r="6" fill="#f6b01e" /><path d="M24 18v6M24 15v2" {...stroke(2, "#fff")} /></svg></TaskButton>
        <TaskButton $w={38} aria-label="Hidden icons"><svg width="16" height="9"><path d="M.5 8.500L8 1l7.500 7.500" {...stroke(1.3, "#fff")} /></svg></TaskButton>
        <TaskButton $w={22} aria-label="Battery"><svg width="20" height="14"><path d="M6 4.500h12v8H5V8" {...stroke(1.2, "#fff")} /><path d="M7 6h9.500v5H6.500V8z" fill="#fff" /><path d="M19.300 7v3M1 2h5v3q0 2-2.500 2T1 5zM2 0v2M5 0v2M3.500 7v6H5" {...stroke(1.2, "#fff")} /></svg></TaskButton>
        <TaskButton $w={38} aria-label="Volume"><svg width="21" height="18"><path d="M1 6h3l4-4v14l-4-4H1zM11 7q1.500 2 0 4M14 4q4 5 0 10M17 1q6 8 0 16" {...stroke(1.2, "#fff")} /></svg></TaskButton>
        <Clock $w={38}>ENG</Clock>
        <Clock $w={58}>13:11</Clock>
        <TaskButton $w={42} aria-label="Notifications"><svg width="20" height="20"><path d="M0 0h20v17h-7l-3 3-3-3H0z" fill="#fff" /><path d="M4 4.500h12M4 8.500h12M4 12.500h8" stroke="#1c1c1c" strokeWidth="1.300" /></svg></TaskButton>
        <TaskGap $w={14} />
        <ShowDesktop aria-label="Show desktop" />
      </TaskBar>
      <Tooltip role="tooltip">Ctrl+Click to select or deselect track.</Tooltip>
    </Window>
  );
}
